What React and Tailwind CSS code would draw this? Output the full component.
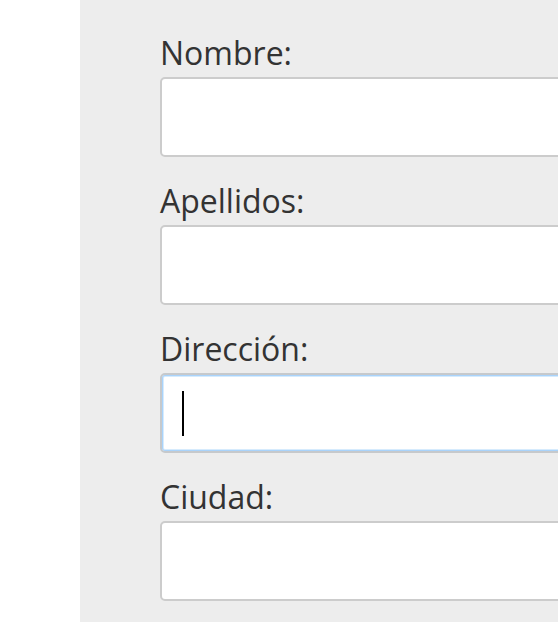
import React from 'react';

const fields = [
  { label: 'Nombre:', focused: false },
  { label: 'Apellidos:', focused: false },
  { label: 'Dirección:', focused: true },
  { label: 'Ciudad:', focused: false },
];

const App = () => {
  return (
    <div
      className="flex h-[622px] w-[558px] overflow-hidden bg-white"
      style={{ fontFamily: '"Open Sans", sans-serif' }}
    >
      <div className="w-[80px] shrink-0 bg-white" />
      <div className="flex-1 bg-[#ededed] pl-[80px] pt-[31px]">
        {fields.map((field) => (
          <div key={field.label} className="mb-[22px]">
            <label className="mb-[2px] block h-[44px] text-[32px] leading-[44px] text-[#333333]">
              {field.label}
            </label>
            <div
              className={`flex h-[80px] w-[480px] items-center rounded-[5px] border-2 bg-white pl-[20px] ${
                field.focused
                  ? 'border-[#c6c9cc] shadow-[inset_0_0_0_1px_#a9d3fb,inset_0_0_0_2px_#d6ebfd]'
                  : 'border-[#cccccc]'
              }`}
            >
              {field.focused && <div className="h-[45px] w-[2px] bg-black" />}
            </div>
          </div>
        ))}
      </div>
    </div>
  );
};

export default App;
